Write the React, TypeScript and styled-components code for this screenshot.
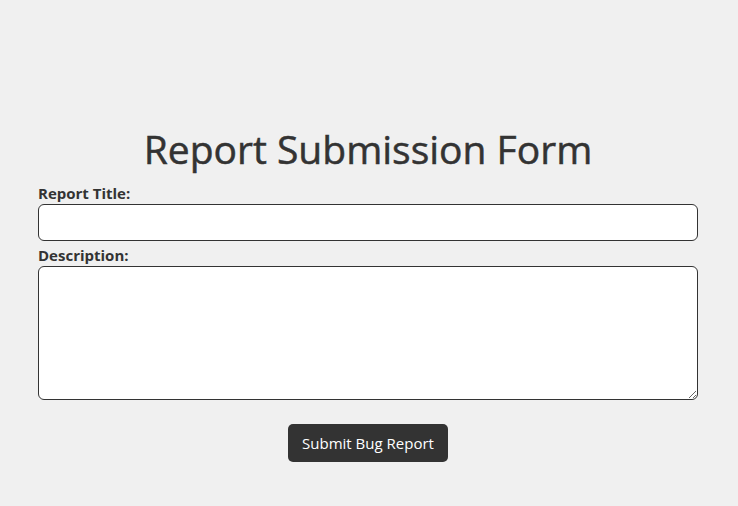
import React, { useState } from 'react';
import styled, { createGlobalStyle } from 'styled-components';

const GlobalStyle = createGlobalStyle`
  html, body {
    margin: 0;
    padding: 0;
    background: #f0f0f0;
  }
  body {
    font-family: 'Open Sans', 'Noto Sans', sans-serif;
    color: #333;
  }
`;

const Page = styled.main`
  box-sizing: border-box;
  min-height: 100vh;
  padding: 123px 40px 0 38px;
`;

const Title = styled.h1`
  margin: 0 0 8px;
  font-size: 39px;
  font-weight: 400;
  line-height: 52px;
  text-align: center;
  color: #333;
  -webkit-text-stroke: 0.5px #333;
`;

const Form = styled.form`
  display: flex;
  flex-direction: column;
`;

const Label = styled.label`
  display: block;
  font-size: 15px;
  font-weight: 700;
  line-height: 20px;
  margin-bottom: 1px;
  color: #333;
`;

const TextInput = styled.input`
  box-sizing: border-box;
  width: 100%;
  height: 37px;
  margin: 0 0 4px;
  padding: 8px 10px;
  border: 1px solid #333;
  border-radius: 6px;
  background: #fff;
  font: inherit;
  font-size: 15px;
`;

const TextArea = styled.textarea`
  box-sizing: border-box;
  width: 100%;
  height: 134px;
  margin: 0;
  padding: 8px 10px;
  border: 1px solid #333;
  border-radius: 6px;
  background: #fff;
  font: inherit;
  font-size: 15px;
  resize: vertical;
`;

const Actions = styled.div`
  display: flex;
  justify-content: center;
  margin-top: 24px;
`;

const SubmitButton = styled.button`
  box-sizing: border-box;
  width: 160px;
  height: 38px;
  border: none;
  border-radius: 5px;
  background: #333;
  color: #fff;
  font-family: inherit;
  font-size: 15px;
  cursor: pointer;
`;

function App(): JSX.Element {
  const [title, setTitle] = useState('');
  const [description, setDescription] = useState('');

  function handleSubmit(e: React.FormEvent) {
    e.preventDefault();
  }

  return (
    <Page>
      <GlobalStyle />
      <Title>Report Submission Form</Title>
      <Form onSubmit={handleSubmit}>
        <Label htmlFor="title">Report Title:</Label>
        <TextInput id="title" type="text" value={title} onChange={(e) => setTitle(e.target.value)} />
        <Label htmlFor="description">Description:</Label>
        <TextArea id="description" value={description} onChange={(e) => setDescription(e.target.value)} />
        <Actions>
          <SubmitButton type="submit">Submit Bug Report</SubmitButton>
        </Actions>
      </Form>
    </Page>
  );
}

export default App;
